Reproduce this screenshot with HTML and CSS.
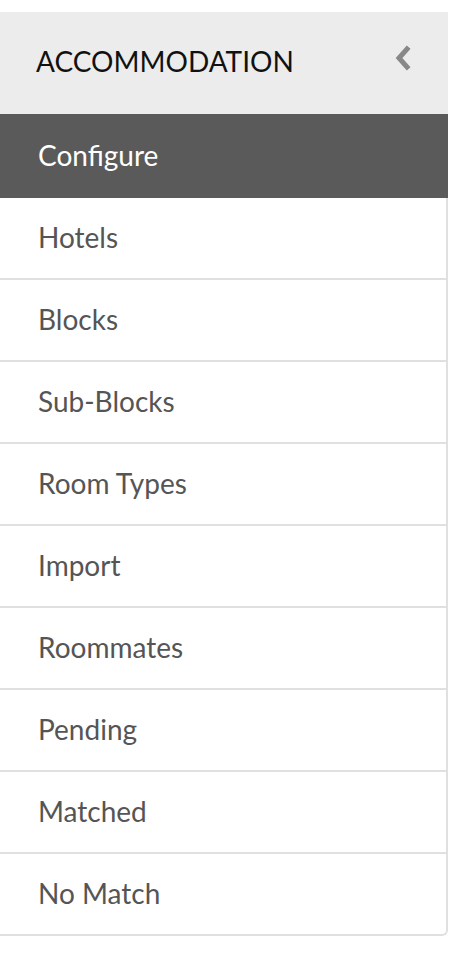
FILE: index.html
```html
<!DOCTYPE html>
<html lang="en">
<head>
    <meta charset="UTF-8">
    <title>Accommodation</title>
    <link rel="stylesheet" href="styles.css">
</head>
<body>

    <div id="side-menu">
        <div class="menu-head">
            <span>Accommodation</span>
            <svg class="collapse-btn" width="18" height="26" viewBox="0 0 18 26">
                <polyline points="13,4 5,13 13,22" fill="none" stroke="#888" stroke-width="5" stroke-linejoin="miter" stroke-linecap="square"/>
            </svg>
        </div>
        <div class="menu-item active">Configure</div>
        <div class="menu-list">
            <div class="menu-item">Hotels</div>
            <div class="menu-item">Blocks</div>
            <div class="menu-item">Sub-Blocks</div>
            <div class="menu-item">Room Types</div>
            <div class="menu-item">Import</div>
            <div class="menu-item">Roommates</div>
            <div class="menu-item">Pending</div>
            <div class="menu-item">Matched</div>
            <div class="menu-item">No Match</div>
        </div>
    </div>

</body>
</html>
```

FILE: styles.css
```css
body {
    margin: 0;
    background-color: white;
    font-family: Lato, 'Open Sans', sans-serif;
}
#side-menu {
    width: 448px;
    margin-top: 12px;
}
.menu-head {
    display: flex;
    align-items: center;
    justify-content: space-between;
    height: 102px;
    padding: 0 36px 4px 36px;
    box-sizing: border-box;
    background-color: #ececec;
    color: #111;
    font-size: 28px;
    text-transform: uppercase;
}
.collapse-btn {
    margin-top: -6px;
}
.menu-item {
    display: flex;
    align-items: center;
    height: 80px;
    padding-left: 38px;
    padding-bottom: 2px;
    box-sizing: border-box;
    color: #555;
    font-size: 28px;
}
.menu-item.active {
    height: 84px;
    background-color: #5a5a5a;
    color: white;
}
.menu-list {
    border-right: 2px solid #e0e0e0;
    border-bottom: 2px solid #e0e0e0;
    border-radius: 0 0 6px 0;
}
.menu-list>.menu-item {
    height: 82px;
    border-bottom: 2px solid #e0e0e0;
}
.menu-list>.menu-item:last-child {
    height: 80px;
    border-bottom: none;
}
```
